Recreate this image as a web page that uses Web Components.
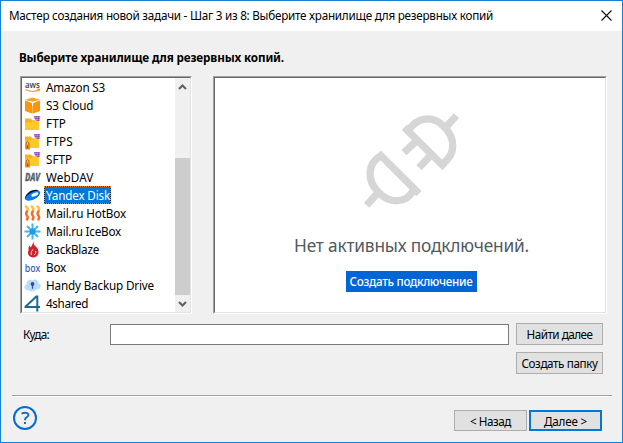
<!DOCTYPE html>
<html lang="ru">
<head>
<meta charset="utf-8">
<title>Мастер создания новой задачи</title>
<style>
html,body{margin:0;height:100%;overflow:hidden}
body{font:11.7px/18px "Noto Sans","Open Sans",sans-serif;color:#000}
</style>
</head>
<body>
<wizard-window></wizard-window>
<script>
const define = (name, html, setup) => customElements.define(name, class extends HTMLElement {
  connectedCallback() {
    if (this.shadowRoot) return;
    const root = this.attachShadow({mode: 'open'});
    const t = document.createElement('template');
    t.innerHTML = typeof html === 'function' ? html(this) : html;
    root.append(t.content.cloneNode(true));
    if (setup) setup(this, root);
  }
});

/* Text run tracked so that its advance equals the "w" attribute. */
define('fit-text', '<style>:host{display:inline-block;white-space:pre}span{display:inline-block}</style><span><slot></slot></span>', (el, root) => {
  const s = root.querySelector('span'), n = el.textContent.length;
  const w = parseFloat(el.getAttribute('w'));
  s.style.letterSpacing = ((w - s.getBoundingClientRect().width) / n) + 'px';
});

const folder = lock => `<path d="M1 3.500h5.500l2 1.700H15V15H1z" fill="#f6b320"/><path d="M1 7.500h6l2-1.500h6V15H1z" fill="#ffca28"/><path d="M9.800 1h6.400v3.200l-1.200 2.600-2.400-1-2.800-2.500z" fill="#d9b3ea"/><path d="M10 1.800h6M10.800 3.600h5M12.500 5.400h3M12 1v3.600M14.300 1v5" stroke="#8a3fb8" stroke-width=".8" fill="none"/>${lock ? '<path d="M2.300 11.500V10a1.300 1.300 0 0 1 2.600 0v1.500" fill="none" stroke="#b4651b"/><path d="M1.200 11.300h4.800V16.500H1.200z" fill="#ee8412"/><path d="M3.100 13h1v2h-1z" fill="#874006"/>' : ''}`;
const icons = {
  aws: '<text x="1" y="8.500" font-family="Noto Sans" font-size="8.500" font-weight="600" fill="#414b58" textLength="15" lengthAdjust="spacingAndGlyphs">aws</text><path d="M1.500 10.500q7 3.700 13 .5M13 10.300l2.500-.2-.6 2.200" stroke="#f79a2c" stroke-width="1.200" fill="none"/>',
  cube: '<path d="M8.500.5l7.500 2.200-7.500 2.400L1 2.700z" fill="#ffa21c"/><path d="M1 3.500l7 2.300v10.700l-7-2.500zM16 3.500L9 5.800v10.700l7-2.500z" fill="#ff9408"/><path d="M8 5.500h1v11H8z" fill="#ffb95c"/><path d="M4.500 4.300l4 1.300 4-1.300" fill="none" stroke="#fff" stroke-width="1.100"/><path d="M8.500 5.500V9" stroke="#fff"/>',
  ftp: folder(0), ftps: folder(1),
  dav: '<text x="1" y="12.300" font-family="Noto Sans" font-size="10" font-style="italic" font-weight="800" fill="#56636e" stroke="#56636e" stroke-width=".3" textLength="15" lengthAdjust="spacingAndGlyphs">DAV</text>',
  yandex: '<path d="M.8 11C2 7 6 2.500 12.500 2.800c4.500 1 3.500 6-.5 8.200s-10 3.800-11.200 0z" fill="#10182a"/><path d="M.8 11.500C3 8 9 3.500 14.500 3.800c4 1.500.5 6-4 8.200s-8.500 2.200-9.700-.5z" fill="#087bff"/><ellipse cx="10.800" cy="7.500" rx="3.700" ry="1.600" transform="rotate(-22 10.800 7.500)" fill="#fff"/>',
  hot: '<g fill="none" stroke-width="2.500" stroke-linecap="round"><path d="M2 1.500c2.500 1.500 2 3.200 1 5M7.700 1.500c2.500 1.500 2 3.200 1 5M13.400 1.500c2.500 1.500 2 3.200 1 5" stroke="#ffbe4a"/><path d="M3 6.500c-1.300 1.500-1 2.700 0 4s.8 2.800 0 4M8.700 6.500c-1.300 1.500-1 2.700 0 4s.8 2.800 0 4M14.400 6.500c-1.300 1.500-1 2.700 0 4s.8 2.800 0 4" stroke="#f2702e"/></g>',
  ice: '<path d="M8.500.5v16M.5 8.500h16M3 3l11 11M14 3L3 14" stroke="#45b6f2" stroke-width="2"/><circle cx="8.500" cy="8.500" r="3" fill="#1e9be5"/>',
  flame: '<path d="M9 0c.8 2.800 1 4 2.700 5.500 1.800 1.800 2.800 3.300 2.800 5.500 0 3.300-2.300 5.500-5.200 5.500S4 14.500 4 11.500C4 8 9.500 5 9 0z" fill="#d3202b"/><path d="M5.500 4.500C4 7 4 9 6 10.500c1.800-2 1.300-4-.5-6z" fill="#d3202b"/><path d="M8.800 8.500c-1.800 2.500-2.200 4.200-1 5.600M11.500 10c.7 2 0 3.200-1.300 3.800" stroke="#fff" stroke-width=".9" fill="none"/>',
  box: '<text x=".8" y="13" font-family="Noto Sans" font-size="10.300" font-weight="500" fill="#2860bd" textLength="15.400" lengthAdjust="spacingAndGlyphs">box</text>',
  cloud: '<path d="M4 13c-4.500.5-4.500-5-1.200-5.500C2 3.500 6 1.500 8.500 3.500 11.500 1 15 3.500 14.500 6.500c3.500 1 2.500 6-1.500 6l-3 1.500-2.500.5z" fill="#b9dcf9"/><circle cx="8.500" cy="7" r="1.900" fill="#3a46a0"/><path d="M7.900 8h1.200v3.800H7.900z" fill="#3a46a0"/>',
  four: '<path d="M13.300 16.500V1.500h-1L1.500 11.700V12H16" fill="none" stroke="#1f6893" stroke-width="2"/>'
};

define('storage-item', el => `<style>
:host{display:flex;height:18px;align-items:center;padding-left:2px}
svg{width:17px;height:17px;flex:none;overflow:visible}
span{margin-left:3px;height:18px;padding:0 1px 0 2px;line-height:18px;box-sizing:border-box}
:host([selected]) span{background:#0078d7;color:#fff;outline:1px dotted #ff8728;outline-offset:-1px;box-shadow:inset 0 0 0 1px #19293a}
</style><svg viewBox="0 0 17 17">${icons[el.getAttribute('icon')]}</svg><span><slot></slot></span>`);

define('scroll-bar', `<style>
:host{display:flex;flex-direction:column;width:15px;background:#f0f0f0}
.a{height:17px;flex:none}.gap{height:63px}.thumb{height:137px;background:#cdcdcd}svg{display:block}
path{fill:none;stroke:#606060;stroke-width:2}
</style><div class="a"><svg width="15" height="17"><path d="M4 11l3.500-3.500L11 11"/></svg></div><div class="gap"></div><div class="thumb"></div><div class="a"><svg width="15" height="17"><path d="M4 7l3.500 3.500L11 7"/></svg></div>`);

define('sunken-panel', `<style>
:host{display:block;box-sizing:border-box;height:238px;border:1px solid;border-color:#a0a0a0 #fff #fff #a0a0a0}
div{display:flex;height:236px;box-sizing:border-box;border:1px solid;border-color:#696969 #e3e3e3 #e3e3e3 #696969;background:#fff}
</style><div><slot></slot></div>`);

define('storage-list', `<style>
:host{display:block;width:172px}.items{flex:1;min-width:0}sunken-panel{width:172px}
</style><sunken-panel><div class="items">
${[['aws','Amazon S3',59],['cube','S3 Cloud',47.5],['ftp','FTP',20],['ftps','FTPS',27],['ftps','SFTP',26],['dav','WebDAV',47.5],['yandex','Yandex Disk',64],['hot','Mail.ru HotBox',80],['ice','Mail.ru IceBox',75],['flame','BackBlaze',53],['box','Box',20],['cloud','Handy Backup Drive',108],['four','4shared',42]]
 .map(([i,t,w]) => `<storage-item icon="${i}"${i === 'yandex' ? ' selected' : ''}><fit-text w="${w}">${t}</fit-text></storage-item>`).join('')}
</div><scroll-bar></scroll-bar></sunken-panel>`);

define('connection-panel', `<style>
:host{display:block;width:394px}
.body{flex:1;display:flex;flex-direction:column;align-items:center}
svg{display:block;margin:22px 0 0 0;flex:none}
.msg{font-size:17.300px;line-height:26px;color:#505a5f;margin:13px 0 0 3px}
.create{background:#0066d4;color:#fff;width:131px;height:21px;line-height:21px;text-align:center;margin:12px 0 0 2px;font-weight:500}
.msg,.create{white-space:nowrap}
</style><sunken-panel><div class="body">
<svg width="120" height="120" viewBox="0 0 360 360"><g fill="none" stroke="#d6d6d6" stroke-width="22"><path d="M163 82L285 203M176 92C200 50 250 45 282 80 318 115 318 165 276 192M202 120L162 158M245 163L207 203M283 87L319 47M85 159L207 281M92 168C52 190 50 240 84 275 118 312 170 312 190 270M82 280L50 316"/></g></svg>
<div class="msg"><fit-text w="235">Нет активных подключений.</fit-text></div>
<div class="create"><fit-text w="123">Создать подключение</fit-text></div>
</div></sunken-panel>`);

define('push-button', `<style>
:host{display:flex;box-sizing:border-box;width:87px;height:22px;border:1px solid #adadad;background:#e1e1e1;align-items:center;justify-content:center;line-height:20px}
:host([nav]){width:73px;height:21px}
:host([primary]){border:2px solid #0078d7}
</style><slot></slot>`);

define('title-bar', `<style>
:host{display:flex;height:30px;background:#fff;justify-content:space-between;padding:0 10px 0 8px;line-height:29px}
svg{margin-top:9px}
</style><slot></slot><svg width="11" height="11"><path d="M.5.500l10 10M10.500.500l-10 10" stroke="#111" stroke-width="1.100"/></svg>`);

define('help-button', `<style>:host{display:block;width:24px;height:24px}svg{display:block}</style>
<svg width="24" height="24"><circle cx="12" cy="12" r="11" fill="none" stroke="#086bd0" stroke-width="2"/><path d="M8.500 7.700q3.200-1.500 5.800-.6c2.200 1.500.7 3.500-.8 4.300-1.300.8-1.500 1.400-1.500 2.800" fill="none" stroke="#1e70b8" stroke-width="2"/><path d="M11 16h2v2h-2z" fill="#1e70b8"/></svg>`);

define('wizard-window', `<style>
:host{display:flex;flex-direction:column;box-sizing:border-box;width:623px;height:443px;border:1px solid #1480d8;background:#f0f0f0}
h1{font-size:11.700px;line-height:18px;font-weight:700;margin:17px 0 10px 18px;height:18px}
.panels{display:flex;gap:21px;padding-left:19px}
.target{display:flex;padding:9px 0 0 22px;height:52px;align-items:flex-start}
.target label{width:87px;line-height:22px}
.field{box-sizing:border-box;width:399px;height:21px;margin-top:1px;border:1px solid #7a7a7a;background:#fff}
.side{display:flex;flex-direction:column;gap:7px;margin-left:7px}
.rule{height:1px;background:#a0a0a0;border-bottom:1px solid #fff;margin:20px 10px 0 11px}
footer{display:flex;padding:9px 20px 0 12px}
nav{display:flex;gap:2px;margin:4px 0 0 auto}
</style>
<title-bar><fit-text w="484">Мастер создания новой задачи - Шаг 3 из 8: Выберите хранилище для резервных копий</fit-text></title-bar>
<h1><fit-text w="265">Выберите хранилище для резервных копий.</fit-text></h1>
<div class="panels"><storage-list></storage-list><connection-panel></connection-panel></div>
<div class="target"><label><fit-text w="26">Куда:</fit-text></label><div class="field"></div>
<div class="side"><push-button><fit-text w="66">Найти далее</fit-text></push-button><push-button><fit-text w="76">Создать папку</fit-text></push-button></div></div>
<div class="rule"></div>
<footer><help-button></help-button><nav><push-button nav><fit-text w="41">&lt; Назад</fit-text></push-button><push-button nav primary><fit-text w="43">Далее &gt;</fit-text></push-button></nav></footer>`);
</script>
</body>
</html>
